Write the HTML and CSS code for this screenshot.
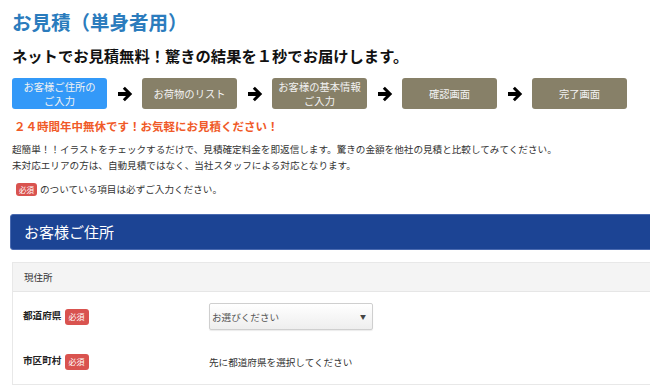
FILE: index.html
```html
<!DOCTYPE html>
<html lang="ja">
<head>
<meta charset="UTF-8">
<title>お見積（単身者用）</title>
<link rel="stylesheet" href="styles.css">
</head>
<body>
<div class="page">
  <h1 class="page-title">お見積（単身者用）</h1>
  <h2 class="lead">ネットでお見積無料！驚きの結果を１秒でお届けします。</h2>

  <div class="steps">
    <div class="step active">お客様ご住所の<br>ご入力</div>
    <svg class="arrow" viewBox="0 0 16 16"><path d="M1 6h8L5.8 2.8 7.9.7 15.2 8l-7.3 7.3-2.1-2.1L9 10H1z"/></svg>
    <div class="step">お荷物のリスト</div>
    <svg class="arrow" viewBox="0 0 16 16"><path d="M1 6h8L5.8 2.8 7.9.7 15.2 8l-7.3 7.3-2.1-2.1L9 10H1z"/></svg>
    <div class="step">お客様の基本情報<br>ご入力</div>
    <svg class="arrow" viewBox="0 0 16 16"><path d="M1 6h8L5.8 2.8 7.9.7 15.2 8l-7.3 7.3-2.1-2.1L9 10H1z"/></svg>
    <div class="step">確認画面</div>
    <svg class="arrow" viewBox="0 0 16 16"><path d="M1 6h8L5.8 2.8 7.9.7 15.2 8l-7.3 7.3-2.1-2.1L9 10H1z"/></svg>
    <div class="step">完了画面</div>
  </div>

  <p class="notice">２４時間年中無休です！お気軽にお見積ください！</p>

  <p class="intro">超簡単！！イラストをチェックするだけで、見積確定料金を即返信します。驚きの金額を他社の見積と比較してみてください。<br>未対応エリアの方は、自動見積ではなく、当社スタッフによる対応となります。</p>

  <p class="required-note"><span class="badge">必須</span> のついている項目は必ずご入力ください。</p>

  <div class="section-bar">お客様ご住所</div>

  <div class="panel">
    <div class="panel-head">現住所</div>
    <div class="panel-body">
      <div class="form-row">
        <div class="form-label">都道府県 <span class="badge">必須</span></div>
        <div class="form-field">
          <div class="select">お選びください<span class="caret">▼</span></div>
        </div>
      </div>
      <div class="form-row">
        <div class="form-label">市区町村 <span class="badge">必須</span></div>
        <div class="form-field">先に都道府県を選択してください</div>
      </div>
    </div>
  </div>
</div>
</body>
</html>
```

FILE: styles.css
```css
* {
  box-sizing: border-box;
}

body {
  margin: 0;
  padding: 0;
  background: #fff;
  color: #333;
  font-family: "Noto Sans CJK JP", "Noto Sans", sans-serif;
  overflow: hidden;
}

.page {
  width: 700px;
  padding: 8px 0 0 12px;
}

.page-title {
  margin: 0;
  font-size: 19.5px;
  line-height: 28px;
  color: #2b7cbd;
  font-weight: bold;
}

.lead {
  margin: 8px 0 0;
  font-size: 15.3px;
  line-height: 22px;
  color: #111;
  font-weight: bold;
}

.steps {
  display: flex;
  align-items: center;
  margin-top: 12px;
}

.step {
  width: 95px;
  height: 31px;
  border-radius: 3px;
  background: #878068;
  color: #f2f2f2;
  font-size: 10.3px;
  line-height: 14px;
  display: flex;
  align-items: center;
  justify-content: center;
  text-align: center;
}

.step.active {
  background: #3399f8;
}

.arrow {
  width: 16px;
  height: 16px;
  margin: 0 9.5px;
  fill: #000;
}

.notice {
  margin: 8px 0 0 2px;
  font-size: 11.5px;
  line-height: 18px;
  color: #f05a28;
  font-weight: bold;
}

.intro {
  margin: 6px 0 0;
  font-size: 9.6px;
  line-height: 16px;
  color: #333;
}

.required-note {
  margin: 8px 0 0 4px;
  font-size: 9.6px;
  line-height: 16px;
  display: flex;
  align-items: center;
  gap: 3px;
}

.badge {
  display: inline-block;
  background: #d9534f;
  color: #fff;
  font-size: 7.5px;
  font-weight: normal;
  line-height: 13px;
  padding: 0 3px;
  border-radius: 3px;
  vertical-align: middle;
}

.section-bar {
  margin: 17px 0 0 -2px;
  height: 36px;
  background: #1c4494;
  border: 1px solid #4a6ab0;
  border-radius: 3px;
  color: #fff;
  font-size: 15px;
  line-height: 34px;
  padding-left: 13px;
}

.panel {
  margin-top: 12px;
  border: 1px solid #e8e8e8;
}

.panel-head {
  height: 29px;
  background: #f4f4f4;
  border-bottom: 1px solid #e6e6e6;
  font-size: 9.5px;
  line-height: 28px;
  padding-left: 11px;
}

.panel-body {
  padding: 2px 0 0;
}

.form-row {
  display: flex;
  align-items: center;
  height: 45px;
}

.form-label {
  width: 196px;
  padding-left: 10px;
  font-size: 9.6px;
  font-weight: bold;
  color: #222;
}

.form-label .badge {
  margin-left: 1px;
  font-size: 8px;
  line-height: 16px;
  padding: 0 4px;
}

.form-field {
  font-size: 9.6px;
  color: #333;
}

.select {
  width: 164px;
  height: 27px;
  border: 1px solid #cfcfcf;
  border-radius: 2px;
  background: linear-gradient(#fff, #eee);
  display: flex;
  align-items: center;
  justify-content: space-between;
  font-size: 9.6px;
  color: #555;
  padding: 0 6px 0 2px;
  box-shadow: 0 1px 1px rgba(0, 0, 0, 0.08);
}

.caret {
  font-size: 6px;
  color: #444;
}
```
